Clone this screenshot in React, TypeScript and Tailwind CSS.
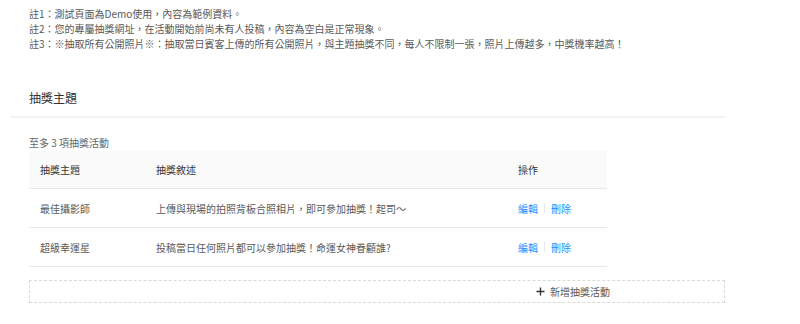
import React from "react";

const font = { fontFamily: '"Noto Sans CJK TC", "Noto Sans", sans-serif' };

const rows = [
  { title: "最佳攝影師", desc: "上傳與現場的拍照背板合照相片，即可參加抽獎！起司～" },
  { title: "超級幸運星", desc: "投稿當日任何照片都可以參加抽獎！命運女神眷顧誰?" },
];

export default function App() {
  return (
    <div className="w-[800px] h-[324px] bg-white overflow-hidden" style={font}>
      <div className="pt-[6px] pl-[29px] text-[10px] leading-[15px] text-[#595959]">
        <div>註1：測試頁面為Demo使用，內容為範例資料。</div>
        <div>註2：您的專屬抽獎網址，在活動開始前尚未有人投稿，內容為空白是正常現象。</div>
        <div>註3：※抽取所有公開照片※：抽取當日賓客上傳的所有公開照片，與主題抽獎不同，每人不限制一張，照片上傳越多，中獎機率越高！</div>
      </div>

      <div className="mt-[39px] ml-[10px] w-[715px] border-b-2 border-[#f2f2f2] pl-[19px] pb-[10px] text-[12px] leading-[16px] text-[#333]">
        抽獎主題
      </div>

      <div className="mt-[18px] pl-[29px] text-[10px] leading-[14px] text-[#666]">至多 3 項抽獎活動</div>

      <div className="ml-[29px] mt-[1px] w-[578px] text-[10px]">
        <div className="grid grid-cols-[116px_362px_1fr] h-[38px] items-center bg-[#fafafa] border-b border-[#e8e8e8] text-[#333]">
          <div className="px-[11px]">抽獎主題</div>
          <div className="px-[11px]">抽獎敘述</div>
          <div className="px-[11px]">操作</div>
        </div>
        {rows.map((r) => (
          <div
            key={r.title}
            className="grid grid-cols-[116px_362px_1fr] h-[39px] items-center border-b border-[#e8e8e8] text-[#595959]"
          >
            <div className="px-[11px]">{r.title}</div>
            <div className="px-[11px]">{r.desc}</div>
            <div className="px-[11px] flex items-center text-[#1890ff]">
              <span>編輯</span>
              <span className="mx-[6px] h-[10px] w-px bg-[#e8e8e8]" />
              <span>刪除</span>
            </div>
          </div>
        ))}
      </div>

      <div className="mt-[13px] ml-[29px] w-[696px] h-[23px] border border-dashed border-[#d9d9d9] flex items-center pl-[506px] text-[10px] text-[#595959]">
        <svg width="9" height="9" viewBox="0 0 9 9" className="mr-[5px]">
          <path d="M4.5 0.5v8M0.5 4.5h8" stroke="#333" strokeWidth="1.4" />
        </svg>
        <span>新增抽獎活動</span>
      </div>
    </div>
  );
}
